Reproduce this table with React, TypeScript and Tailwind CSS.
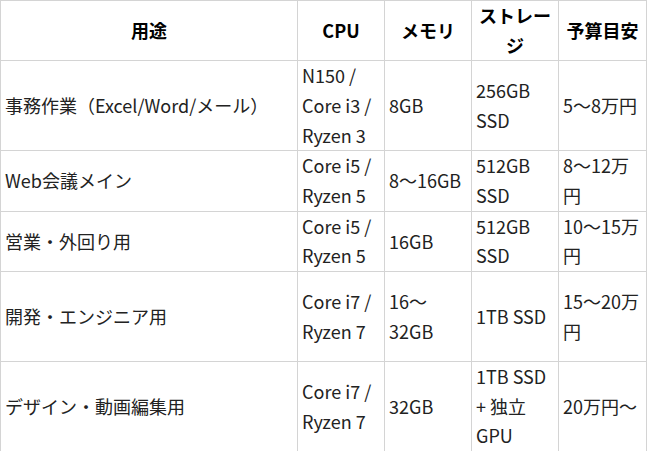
const rows: { cells: string[]; tall?: boolean }[] = [
  { cells: ['事務作業（Excel/Word/メール）', 'N150 / Core i3 / Ryzen 3', '8GB', '256GB SSD', '5〜8万円'] },
  { cells: ['Web会議メイン', 'Core i5 / Ryzen 5', '8〜16GB', '512GB SSD', '8〜12万円'] },
  { cells: ['営業・外回り用', 'Core i5 / Ryzen 5', '16GB', '512GB SSD', '10〜15万円'] },
  { cells: ['開発・エンジニア用', 'Core i7 / Ryzen 7', '16〜32GB', '1TB SSD', '15〜20万円'], tall: true },
  { cells: ['デザイン・動画編集用', 'Core i7 / Ryzen 7', '32GB', '1TB SSD + 独立GPU', '20万円〜'] },
];

const headers = ['用途', 'CPU', 'メモリ', 'ストレージ', '予算目安'];

export default function App() {
  return (
    <div className="bg-white w-[647px] h-[451px] overflow-hidden font-['Noto_Sans_CJK_JP',sans-serif] text-[18px] leading-[29.67px] text-[#222]">
      <table className="table-fixed border-collapse w-[646px]">
        <colgroup>
          <col className="w-[297px]" />
          <col className="w-[87px]" />
          <col className="w-[87px]" />
          <col className="w-[87px]" />
          <col className="w-[88px]" />
        </colgroup>
        <thead>
          <tr>
            {headers.map((h) => (
              <th key={h} className="border border-[#d4d4d4] px-1 py-0 text-center align-middle font-bold text-black">
                {h}
              </th>
            ))}
          </tr>
        </thead>
        <tbody>
          {rows.map((r, i) => (
            <tr key={i} className={r.tall ? 'h-[90px]' : ''}>
              {r.cells.map((c, j) => (
                <td key={j} className="border border-[#d4d4d4] px-1 py-0 text-left align-middle font-normal">
                  {c}
                </td>
              ))}
            </tr>
          ))}
        </tbody>
      </table>
    </div>
  );
}
